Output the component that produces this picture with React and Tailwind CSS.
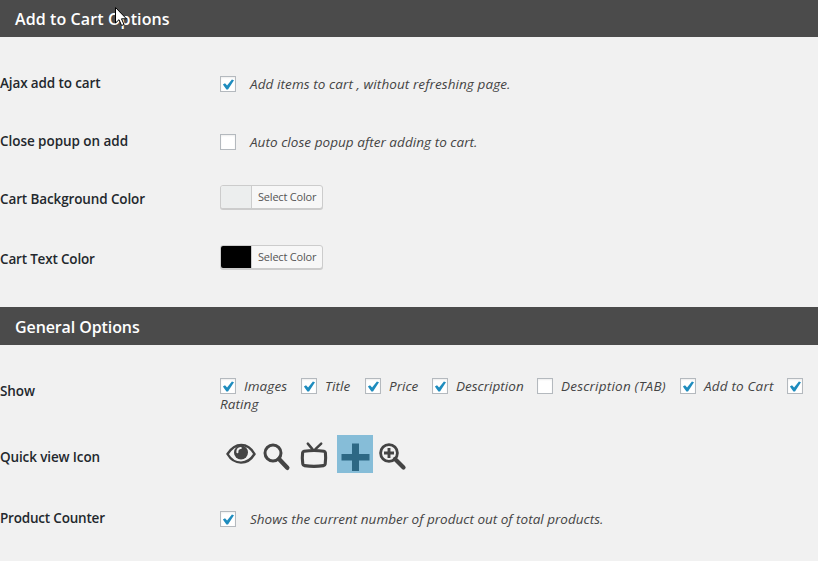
import React from "react";

function Check({ on = true }) {
  return (
    <span className="block h-4 w-4 shrink-0 border border-[#b4b9be] bg-white shadow-[inset_0_1px_2px_rgba(0,0,0,0.07)]">
      {on && (
        <svg viewBox="0 0 14 14" className="block h-[14px] w-[14px]">
          <path d="M1.9 7.6 L4 6.2 L6.1 8.5 L10.9 2.5 L13 3.3 L7 12.4 L5.4 12.4 Z" fill="#1e8cbe" />
        </svg>
      )}
    </span>
  );
}

function Header({ children, className }) {
  return (
    <h2 className="flex h-[38px] items-center bg-[#4b4b4b] pl-[15px] pt-[2px] text-[16px] font-semibold leading-none text-white">
      <span className={className}>{children}</span>
    </h2>
  );
}

function Row({ label, height, labelClass, children }) {
  return (
    <div className={"flex items-center " + height}>
      <div className="w-[220px] shrink-0 whitespace-nowrap text-[13.5px] font-semibold leading-[18px] tracking-[-0.12px] text-[#23282d]">
        <span className={labelClass}>{label}</span>
      </div>
      {children}
    </div>
  );
}

function Hint({ children, className }) {
  return (
    <span className="ml-[14px] whitespace-nowrap text-[13.5px] italic leading-[18px] text-[#444]">
      <span className={className}>{children}</span>
    </span>
  );
}

function ColorButton({ swatch, className }) {
  return (
    <button className={"flex h-6 w-[103px] overflow-hidden rounded-[3px] border border-[#ccc] bg-[#f7f7f7] shadow-[0_1px_0_#ccc] " + className}>
      <span className={"h-full w-[30px] shrink-0 " + swatch} />
      <span className="h-full flex-1 whitespace-nowrap border-l border-[#ccc] pl-[6px] text-left text-[11px] leading-[22px] tracking-[-0.2px] text-[#555]">
        Select Color
      </span>
    </button>
  );
}

const shown = [
  ["Images", true, "w-[81px]", "tracking-[0.1px]"],
  ["Title", true, "w-[64px]", "tracking-[0.15px]"],
  ["Price", true, "w-[67px]", ""],
  ["Description", true, "w-[105px]", "tracking-[0.02px]"],
  ["Description (TAB)", false, "w-[143px]", "tracking-[0.22px]"],
  ["Add to Cart", true, "w-[107px]", "tracking-[0.18px]"],
];

function Icons() {
  return (
    <div className="mb-[6px] flex h-[38px] items-start text-[#444]">
      <svg className="ml-[12px] mt-[8px] h-[22px] w-[30px]" viewBox="0 0 30 22" fill="none">
        <path d="M1.5 11 C6 4 11 2 15.3 2 C20 2 25 4.8 28.5 11 C24.5 17.5 19.5 19.6 15 19.6 C10 19.6 5 17 1.5 11Z" stroke="currentColor" strokeWidth="2.4" />
        <circle cx="15" cy="9.5" r="7" fill="currentColor" />
        <path d="M11.4 9.2 C11.2 6.5 12.6 5.3 14.8 5.1" stroke="#f1f1f1" strokeWidth="2" strokeLinecap="round" />
      </svg>
      <svg className="ml-[7px] mt-[8px] h-[28px] w-[28px]" viewBox="0 0 28 28" fill="none" stroke="currentColor">
        <circle cx="10" cy="10" r="8" strokeWidth="3" />
        <path d="M16 16 L24.3 24.8" strokeWidth="4.4" strokeLinecap="round" />
      </svg>
      <svg className="ml-[9px] mt-[6px] h-[28px] w-[28px]" viewBox="0 0 28 28" fill="none" stroke="currentColor">
        <path d="M7.8 2.6 L12.6 8.4 M21.2 2.6 L15.2 8.4" strokeWidth="2.5" strokeLinecap="round" />
        <path d="M4 10.2 Q14 8.8 24 10.2 Q25.2 10.4 25.4 11.7 Q26 17 25.2 23 Q25 24.4 23.5 24.6 Q14 26.2 4.5 24.6 Q3 24.4 2.8 23 Q1.9 17 2.6 11.7 Q2.8 10.4 4 10.2Z" strokeWidth="3.1" />
      </svg>
      <div className="ml-[9px] h-[38px] w-[36px] bg-[#86bdd8]">
        <svg className="h-[38px] w-[36px]" viewBox="0 0 36 38">
          <path d="M15 8.5 H22 V19 H32.5 V25.6 H22 V36 H15 V25.6 H4.5 V19 H15Z" fill="#2d6884" />
        </svg>
      </div>
      <svg className="ml-[5px] mt-[7px] h-[29px] w-[29px]" viewBox="0 0 29 29" fill="none" stroke="currentColor">
        <circle cx="11" cy="11" r="8.4" strokeWidth="2.8" />
        <path d="M17 17 L25.5 25.5" strokeWidth="4.2" strokeLinecap="round" />
        <path d="M11 6 V16 M6 11 H16" strokeWidth="2.9" />
      </svg>
    </div>
  );
}

export default function App() {
  return (
    <main className="relative h-[561px] w-[818px] overflow-hidden bg-[#f1f1f1] font-['Open_Sans','Noto_Sans',sans-serif]">
      <div className="-mt-px">
        <Header className="tracking-[0.1px]">Add to Cart Options</Header>
      </div>
      <section className="h-[270px] pt-[18px]">
        <Row label="Ajax add to cart" height="h-[58px]" labelClass="block pb-[2px]">
          <Check />
          <Hint className="tracking-[0.09px]">Add items to cart , without refreshing page.</Hint>
        </Row>
        <Row label="Close popup on add" height="h-[58px]" labelClass="block pb-[2px] tracking-[-0.05px]">
          <Check on={false} />
          <Hint className="tracking-[0.05px]">Auto close popup after adding to cart.</Hint>
        </Row>
        <Row label="Cart Background Color" height="h-[58px]" labelClass="block pb-[2px]">
          <ColorButton swatch="bg-[#eceeee]" className="mb-[6px]" />
        </Row>
        <Row label="Cart Text Color" height="h-[60px]" labelClass="tracking-[-0.18px]">
          <ColorButton swatch="bg-black" className="mb-[4px]" />
        </Row>
      </section>
      <Header className="tracking-[-0.1px]">General Options</Header>
      <section className="pt-[16px]">
        <Row label="Show" height="h-[60px]">
          <div className="pt-2 text-[13.5px] italic leading-[18px] text-[#444]">
            <div className="flex items-center">
              {shown.map(([name, on, width, tracking]) => (
                <label key={name} className={"flex shrink-0 items-center gap-2 whitespace-nowrap " + width}>
                  <Check on={on} />
                  <span className={tracking}>{name}</span>
                </label>
              ))}
              <Check />
            </div>
            <div className="tracking-[0.1px]">Rating</div>
          </div>
        </Row>
        <Row label="Quick view Icon" height="h-[72px]">
          <div className="-ml-[6px]"><Icons /></div>
        </Row>
        <Row label="Product Counter" height="h-[52px]" labelClass="block pb-[2px] tracking-[-0.2px]">
          <Check />
          <Hint className="tracking-[0.01px]">Shows the current number of product out of total products.</Hint>
        </Row>
      </section>
      <svg className="absolute left-[114px] top-[6px] h-[22px] w-[14px]" viewBox="0 0 14 22">
        <path d="M1.5 1.5 V17 L5 13.7 L7.6 19.5 L10 18.5 L7.5 12.8 H12.4Z" fill="#fff" stroke="#000" strokeWidth="1" />
      </svg>
    </main>
  );
}
